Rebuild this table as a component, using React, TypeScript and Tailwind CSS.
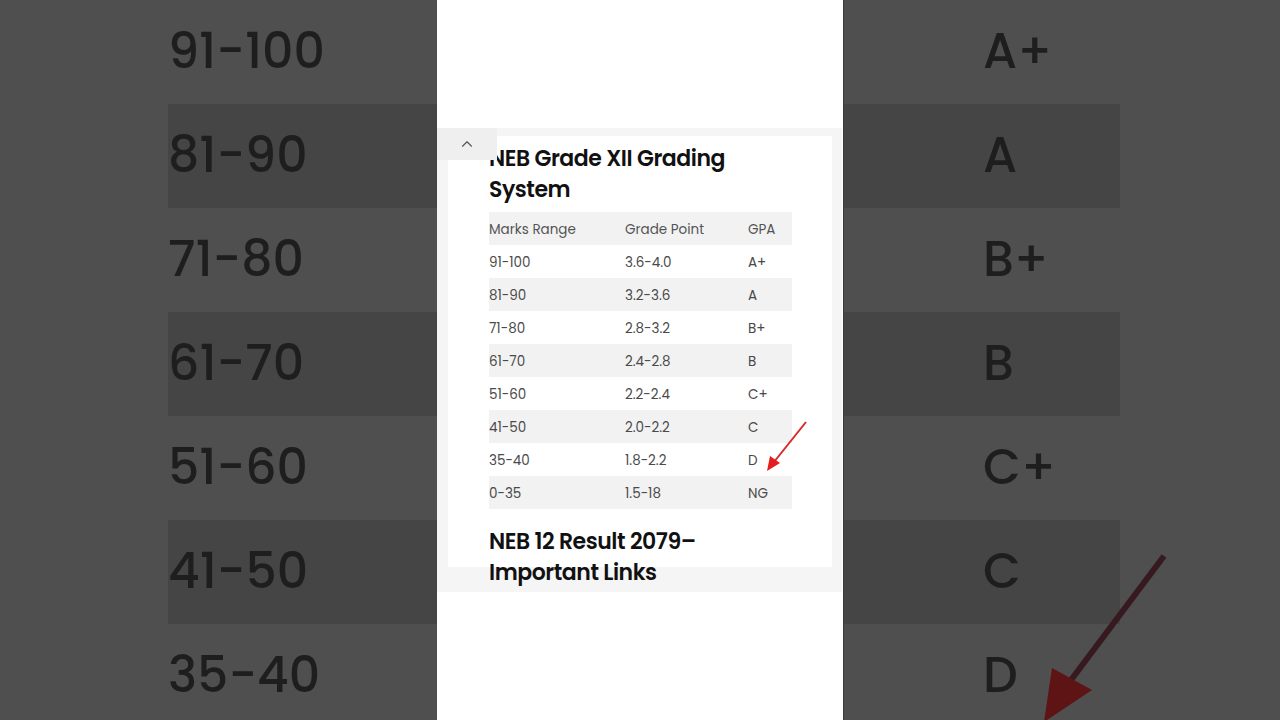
import { ChevronUp } from "lucide-react";

const rows = [
  ["91-100", "3.6-4.0", "A+"],
  ["81-90", "3.2-3.6", "A"],
  ["71-80", "2.8-3.2", "B+"],
  ["61-70", "2.4-2.8", "B"],
  ["51-60", "2.2-2.4", "C+"],
  ["41-50", "2.0-2.2", "C"],
  ["35-40", "1.8-2.2", "D"],
  ["0-35", "1.5-18", "NG"],
];

const font = { fontFamily: "Poppins, 'Noto Sans', Inter, sans-serif" };

export default function App() {
  return (
    <div className="relative h-[720px] w-[1280px] overflow-hidden bg-[#4f4f4f]" style={font}>
      {/* Blurred, zoomed table in the background */}
      <div className="flex flex-col">
        {rows.slice(0, 7).map((r, i) => (
          <div
            key={r[0]}
            className={`ml-[168px] flex h-[104px] w-[952px] shrink-0 items-center text-[49px] font-medium text-[#1e1e1e] ${
              i % 2 === 1 ? "bg-[#454545]" : ""
            }`}
          >
            <span className="w-[815px]">{r[0]}</span>
            <span>{r[2]}</span>
          </div>
        ))}
      </div>

      {/* big arrow in background */}
      <svg className="absolute left-0 top-0" width="1280" height="720">
        <line x1="1164" y1="556" x2="1068" y2="684" stroke="#361a20" strokeWidth="6" />
        <polygon points="1044,722 1052,668 1092,690" fill="#5e1414" />
      </svg>

      {/* Center page */}
      <div className="absolute left-[437px] top-0 h-full w-[406px] bg-white shadow-[1px_0_0_#3a3a3a]">
        <div className="relative mt-[128px] h-[464px] w-[405px] bg-[#f5f5f5] pl-[11px] pt-[8px]">
          <div className="absolute left-0 top-0 flex h-[32px] w-[60px] items-center justify-center bg-[#efefef]">
            <ChevronUp className="h-[18px] w-[18px] text-[#555]" strokeWidth={1.5} />
          </div>
          <div className="h-[431px] w-[384px] bg-white pl-[41px] pt-[7px]">
            <h2 className="w-[260px] text-[22px] font-semibold leading-[31px] tracking-[-0.45px] text-[#111]">
              NEB Grade XII Grading System
            </h2>
            <div className="mt-[7px] w-[303px] text-[13.5px] text-[#4a4a4a]">
              <div className="flex h-[33px] items-center bg-[#f2f2f2] pt-[3px] text-[#555]">
                <span className="w-[136px]">Marks Range</span>
                <span className="w-[123px]">Grade Point</span>
                <span>GPA</span>
              </div>
              {rows.map((r, i) => (
                <div
                  key={r[0]}
                  className={`flex h-[33px] items-center pt-[3px] ${i % 2 === 1 ? "bg-[#f2f2f2]" : "bg-white"}`}
                >
                  <span className="w-[136px]">{r[0]}</span>
                  <span className="w-[123px]">{r[1]}</span>
                  <span>{r[2]}</span>
                </div>
              ))}
            </div>
            <h2 className="mt-[17px] w-[240px] text-[22px] font-semibold leading-[31px] tracking-[-0.45px] text-[#111]">
              NEB 12 Result 2079– Important Links
            </h2>
          </div>
        </div>

        {/* small red arrow */}
        <svg className="absolute left-0 top-0" width="406" height="720">
          <line x1="369" y1="422" x2="337" y2="462" stroke="#d42a2a" strokeWidth="2" />
          <polygon points="330,471 333,456 343,463" fill="#e41e1e" />
        </svg>
      </div>
    </div>
  );
}
